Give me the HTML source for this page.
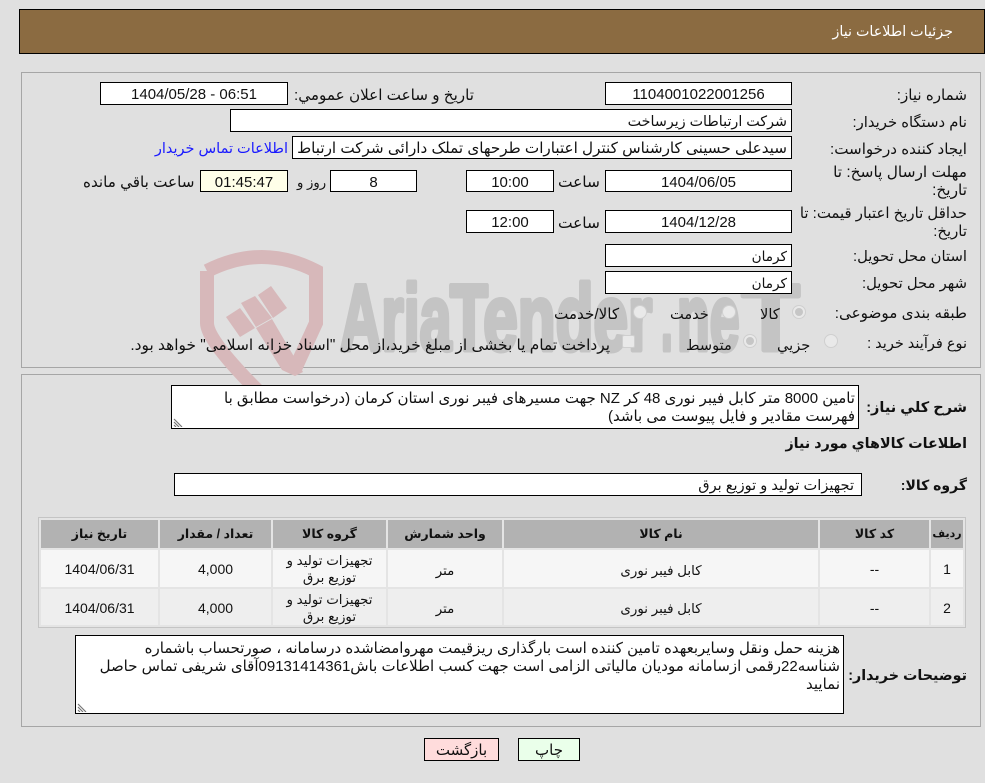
<!DOCTYPE html>
<html lang="fa" dir="rtl"><head><meta charset="utf-8"><title>جزئیات اطلاعات نیاز</title>
<style>
html,body{margin:0;padding:0}
body{width:985px;height:783px;overflow:hidden;background:#e0e0e0;position:relative;font-family:"Liberation Sans","DejaVu Sans",sans-serif;font-size:14.67px;color:#111}
div,span.a{position:absolute;box-sizing:border-box}
.p{border:1px solid #a6a6a6;border-right-color:#aaa}
.f{background:#fff;border:1px solid #000;white-space:nowrap;text-align:center;line-height:24px;font-size:15px}
.r{text-align:right;padding-right:4px;font-size:13.6px}
.t{white-space:nowrap;line-height:20px;font-size:15.1px}
.b{font-weight:bold}
.ta{background:#fff;border:1px solid #000;text-align:right;padding:4px 3px 0;font-size:15px;line-height:18px;white-space:nowrap;overflow:hidden}
.rz{position:absolute;left:1px;bottom:1px}
.h{background:#b2b2b2;font-weight:bold;text-align:center;font-size:12.5px;line-height:29px;white-space:nowrap}
.c{text-align:center;font-size:13.4px;display:flex;align-items:center;justify-content:center;line-height:17px;padding-top:1px}
.m{padding-top:3px}
.n{font-size:14px;padding-top:2px}
.o1{background:#f6f6f6}.o2{background:#eee}
.rd{width:14px;height:14px;border-radius:50%;background:#e9e9e9;border:1px solid #cfcfcf}
.rd.s:after{content:"";position:absolute;left:2px;top:2px;width:8px;height:8px;border-radius:50%;background:#c6c6c6}
.btn{border:1px solid #000;text-align:center;line-height:23px;height:23px;top:738px;font-size:15px}
svg text{direction:ltr;unicode-bidi:bidi-override;font-family:"Liberation Sans",sans-serif;font-weight:bold;font-size:94px;fill:#c4c4c4;stroke:#c4c4c4;stroke-width:5px;stroke-linejoin:round}
</style></head><body>

<div style="left:19px;top:9px;width:966px;height:45px;background:#8b6b41;border:1px solid #000"></div>
<div class="t" style="right:32px;top:22px;color:#fff;font-size:14.3px">جزئیات اطلاعات نیاز</div>

<div class="p" style="left:21px;top:72px;width:960px;height:296px"></div>
<div class="p" style="left:21px;top:374px;width:960px;height:353px"></div>

<svg style="position:absolute;left:0;top:0" width="985" height="783">
<g fill="none" stroke="#d7b8ba" stroke-width="14">
<path d="M207 271Q262 243 316 271V323L295 369M207 271V323Q207 340 257 390"/>
</g>
<g fill="#d7b8ba">
<polygon points="226,317 240,308 255,328 240,337"/>
<polygon points="241,303 255,296 272,318 256,327"/>
<polygon points="258,295 271,286 287,308 273,318"/>
<polygon points="256,328 272,319 303,372 295,376 282,370"/>
</g>
<text transform="translate(340,350) scale(.61,1)">Aria</text>
<text transform="translate(450,350) scale(.66,1)">Tender</text>
<text transform="translate(661,350) scale(.45,1)">.</text>
<text transform="translate(677,350) scale(.57,1)">ne</text>
<text transform="translate(742,350) scale(1,1)">T</text>
</svg>

<div class="t" style="right:18px;top:86px">شماره نیاز:</div>
<div class="f" style="left:605px;top:82px;width:187px;height:23px">1104001022001256</div>
<div class="t" style="right:511px;top:86px;font-size:15.2px">تاریخ و ساعت اعلان عمومي:</div>
<div class="f" style="left:100px;top:82px;width:188px;height:23px" dir="ltr">1404/05/28 - 06:51</div>

<div class="t" style="right:18px;top:113px;font-size:14.8px">نام دستگاه خریدار:</div>
<div class="f r" style="left:230px;top:109px;width:562px;height:23px;font-size:14.3px">شرکت ارتباطات زیرساخت</div>

<div class="t" style="right:18px;top:140px">ایجاد کننده درخواست:</div>
<div class="f r" style="left:292px;top:136px;width:500px;height:23px;overflow:hidden;font-size:15.2px">سیدعلی حسینی کارشناس کنترل اعتبارات طرحهای تملک دارائی شرکت ارتباط</div>
<div class="t" style="right:697px;top:139px;color:#1a1aff;font-size:14.5px">اطلاعات تماس خریدار</div>

<div class="t" style="right:18px;top:164px;line-height:18px;text-align:right;font-size:15.4px">مهلت ارسال پاسخ: تا<br>تاریخ:</div>
<div class="f" style="left:605px;top:170px;width:187px;height:22px;line-height:23px">1404/06/05</div>
<div class="t" style="left:558px;top:173px;font-size:15.4px">ساعت</div>
<div class="f" style="left:466px;top:170px;width:88px;height:22px;line-height:23px">10:00</div>
<div class="f" style="left:330px;top:170px;width:87px;height:22px;line-height:23px">8</div>
<div class="t" style="left:297px;top:173px;font-size:13.2px">روز و</div>
<div class="f" style="left:200px;top:170px;width:88px;height:22px;line-height:23px;background:#ffffe8">01:45:47</div>
<div class="t" style="left:83px;top:173px;font-size:15.2px">ساعت باقي مانده</div>

<div class="t" style="right:18px;top:205px;line-height:18px;text-align:right;font-size:14.9px">حداقل تاریخ اعتبار قیمت: تا<br>تاریخ:</div>
<div class="f" style="left:605px;top:210px;width:187px;height:23px">1404/12/28</div>
<div class="t" style="left:558px;top:214px;font-size:15.4px">ساعت</div>
<div class="f" style="left:466px;top:210px;width:88px;height:23px">12:00</div>

<div class="t" style="right:18px;top:247px;font-size:14.8px">استان محل تحویل:</div>
<div class="f r" style="left:605px;top:244px;width:187px;height:23px">کرمان</div>
<div class="t" style="right:18px;top:274px;font-size:14.8px">شهر محل تحویل:</div>
<div class="f r" style="left:605px;top:271px;width:187px;height:23px">کرمان</div>

<div class="t" style="right:18px;top:304px;font-size:15.2px">طبقه بندی موضوعی:</div>
<div class="rd s" style="left:792px;top:305px"></div>
<div class="t" style="left:760px;top:305px;font-size:14.6px">کالا</div>
<div class="rd" style="left:722px;top:305px"></div>
<div class="t" style="left:670px;top:305px;font-size:14.6px">خدمت</div>
<div class="rd" style="left:633px;top:305px"></div>
<div class="t" style="left:554px;top:305px;font-size:15.2px">کالا/خدمت</div>

<div class="t" style="right:18px;top:334px;font-size:14.5px">نوع فرآیند خرید :</div>
<div class="rd" style="left:824px;top:334px"></div>
<div class="t" style="left:777px;top:336px;font-size:14.6px">جزيي</div>
<div class="rd s" style="left:743px;top:334px"></div>
<div class="t" style="left:686px;top:336px;font-size:14.6px">متوسط</div>
<div style="left:622px;top:335px;width:13px;height:13px;background:#e9e9e9;border:1px solid #cfcfcf;border-radius:2px"></div>
<div class="t" style="right:375px;top:336px;font-size:15.4px">پرداخت تمام یا بخشی از مبلغ خرید،از محل "اسناد خزانه اسلامی" خواهد بود.</div>

<div class="t b" style="right:18px;top:398px;font-size:14.5px">شرح کلي نیاز:</div>
<div class="ta" style="left:171px;top:385px;width:688px;height:44px">تامین 8000 متر کابل فیبر نوری 48 کر NZ جهت مسیرهای فیبر نوری استان کرمان (درخواست مطابق با<br>فهرست مقادیر و فایل پیوست می باشد)<svg class="rz" width="11" height="11"><path d="M1 3l8 8M1 6l5 5M1 9l2 2" stroke="#777" stroke-width="1.2" fill="none"/></svg></div>

<div class="t b" style="right:18px;top:434px;font-size:14.3px">اطلاعات کالاهاي مورد نیاز</div>
<div class="t b" style="right:18px;top:475px;font-size:14px">گروه کالا:</div>
<div class="f" style="left:174px;top:473px;width:688px;height:23px;text-align:right;padding-right:7px;font-size:14.6px">تجهیزات تولید و توزیع برق</div>

<div style="left:38px;top:517px;width:928px;height:111px;border:1px solid #c4c4c4;background:#e4e4e4"></div>
<div class="h" style="left:931px;top:520px;width:32px;height:28px;font-size:11px">ردیف</div>
<div class="h" style="left:820px;top:520px;width:109px;height:28px">کد کالا</div>
<div class="h" style="left:504px;top:520px;width:314px;height:28px">نام کالا</div>
<div class="h" style="left:388px;top:520px;width:114px;height:28px">واحد شمارش</div>
<div class="h" style="left:273px;top:520px;width:113px;height:28px">گروه کالا</div>
<div class="h" style="left:160px;top:520px;width:111px;height:28px">تعداد / مقدار</div>
<div class="h" style="left:41px;top:520px;width:117px;height:28px">تاریخ نیاز</div>

<div class="c o1 n" style="left:931px;top:550px;width:32px;height:37px">1</div>
<div class="c o1 n" style="left:820px;top:550px;width:109px;height:37px">--</div>
<div class="c o1 m" style="left:504px;top:550px;width:314px;height:37px">کابل فیبر نوری</div>
<div class="c o1 m" style="left:388px;top:550px;width:114px;height:37px">متر</div>
<div class="c o1" style="left:273px;top:550px;width:113px;height:37px">تجهیزات تولید و<br>توزیع برق</div>
<div class="c o1 n" style="left:160px;top:550px;width:111px;height:37px">4,000</div>
<div class="c o1 n" style="left:41px;top:550px;width:117px;height:37px">1404/06/31</div>

<div class="c o2 n" style="left:931px;top:589px;width:32px;height:36px">2</div>
<div class="c o2 n" style="left:820px;top:589px;width:109px;height:36px">--</div>
<div class="c o2 m" style="left:504px;top:589px;width:314px;height:36px">کابل فیبر نوری</div>
<div class="c o2 m" style="left:388px;top:589px;width:114px;height:36px">متر</div>
<div class="c o2" style="left:273px;top:589px;width:113px;height:36px">تجهیزات تولید و<br>توزیع برق</div>
<div class="c o2 n" style="left:160px;top:589px;width:111px;height:36px">4,000</div>
<div class="c o2 n" style="left:41px;top:589px;width:117px;height:36px">1404/06/31</div>

<div class="t b" style="right:18px;top:666px;font-size:14.3px">توضیحات خریدار:</div>
<div class="ta" style="left:75px;top:635px;width:769px;height:79px">هزینه حمل ونقل وسایربعهده تامین کننده است بارگذاری ریزقیمت مهروامضاشده درسامانه ، صورتحساب باشماره<br>شناسه22رقمی ازسامانه مودیان مالیاتی الزامی است جهت کسب اطلاعات باش09131414361آقای شریفی تماس حاصل<br>نمایید<svg class="rz" width="11" height="11"><path d="M1 3l8 8M1 6l5 5M1 9l2 2" stroke="#777" stroke-width="1.2" fill="none"/></svg></div>

<div class="btn" style="left:424px;width:75px;background:#ffdcdc">بازگشت</div>
<div class="btn" style="left:518px;width:62px;background:#eaffea">چاپ</div>

</body></html>
